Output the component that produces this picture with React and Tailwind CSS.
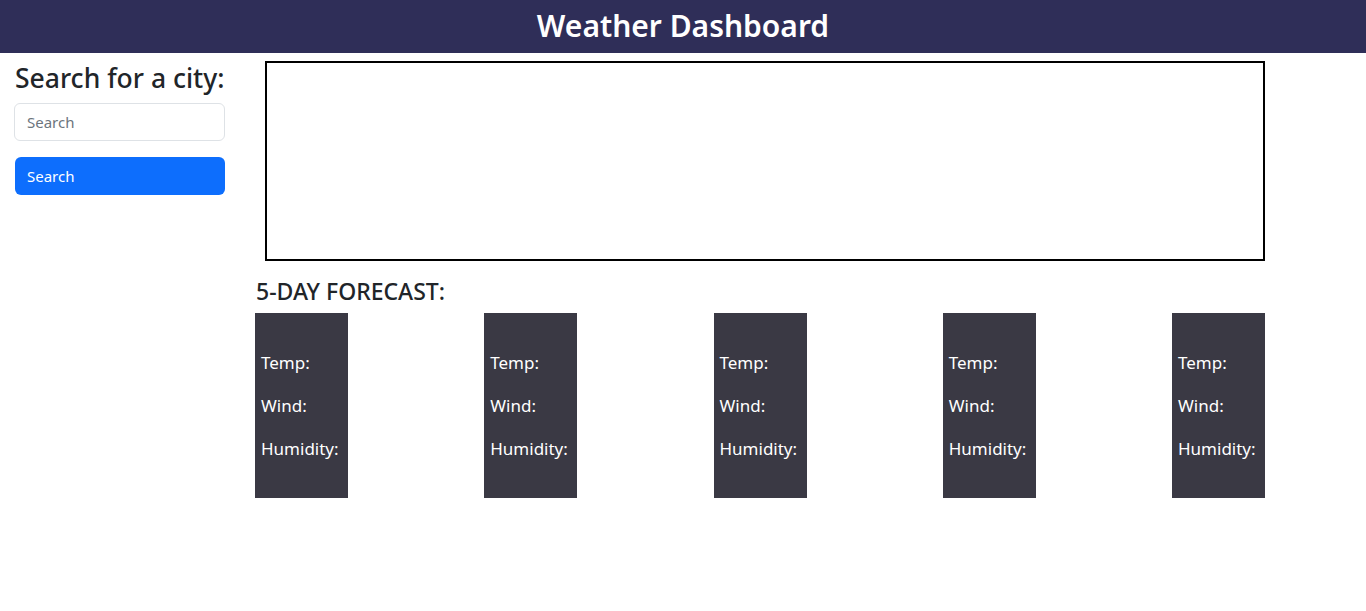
export default function App() {
    const days = [1, 2, 3, 4, 5];

    return (
        <div className="min-h-screen bg-white text-[#212529] font-['Noto_Sans',sans-serif]">
            {/* Header */}
            <header className="h-[53px] bg-[#2f2e58] flex items-center justify-center">
                <h1 className="text-white text-[30px] font-semibold leading-none pb-px">Weather Dashboard</h1>
            </header>

            <div className="flex">
                {/* Sidebar */}
                <aside className="w-[255px] pl-[14px] pr-[30px] pt-[10px]">
                    <h2 className="text-[26.5px] font-medium leading-[1.2] pl-[1px] whitespace-nowrap">Search for a city:</h2>
                    <input
                        type="text"
                        placeholder="Search"
                        className="mt-[8px] w-full h-[38px] border border-[#dee2e6] rounded-[6px] px-[12px] text-[15px] placeholder:text-[#6c757d] outline-none"
                    />
                    <button className="mt-[16px] ml-px w-[210px] h-[38px] bg-[#0d6efd] text-white rounded-[6px] text-left px-[12px] text-[15px]">
                        Search
                    </button>
                </aside>

                {/* Main */}
                <main className="w-[1010px] pt-[8px]">
                    <div className="ml-[10px] w-[1000px] h-[200px] border-2 border-black"></div>
                    <h4 className="mt-[17px] ml-px text-[23px] font-medium leading-[1.2]">5-DAY FORECAST:</h4>
                    <div className="mt-[7px] flex justify-between">
                        {days.map((d) => (
                            <div key={d} className="w-[93px] h-[185px] bg-[#3a3944] text-white text-[17px] pl-[6px] pt-[36px]">
                                <p className="mb-[16px] leading-[27px]">Temp:</p>
                                <p className="mb-[16px] leading-[27px]">Wind:</p>
                                <p className="leading-[27px] whitespace-nowrap">Humidity:</p>
                            </div>
                        ))}
                    </div>
                </main>
            </div>
        </div>
    );
}
